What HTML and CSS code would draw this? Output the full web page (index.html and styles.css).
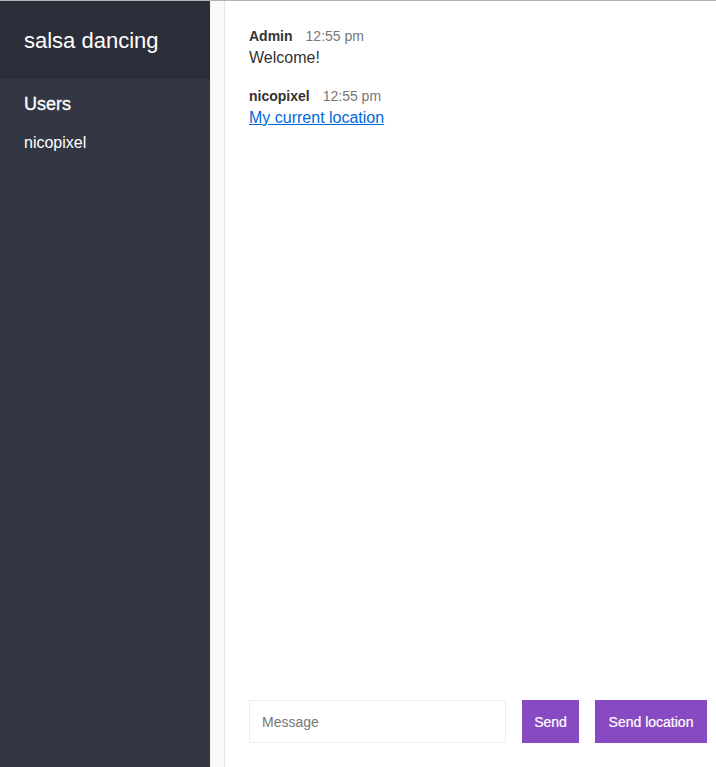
FILE: index.html
```html
<!DOCTYPE html>
<html>
<head>
<meta charset="utf-8">
<title>Chat</title>
<link rel="stylesheet" href="styles.css">
</head>
<body>
<div class="chat">
  <aside class="sidebar">
    <div class="sidebar__content">
      <h2 class="room-title">salsa dancing</h2>
      <h3 class="list-title">Users</h3>
      <ul class="users">
        <li>nicopixel</li>
      </ul>
    </div>
    <div class="scrolltrack"></div>
  </aside>
  <main class="main">
    <div class="messages">
      <div class="message">
        <p class="meta"><span class="name">Admin</span><span class="time">12:55 pm</span></p>
        <p class="body">Welcome!</p>
      </div>
      <div class="message">
        <p class="meta"><span class="name">nicopixel</span><span class="time">12:55 pm</span></p>
        <p class="body"><a href="#" class="link">My current location</a></p>
      </div>
    </div>
    <div class="compose">
      <form class="compose__form">
        <input class="compose__input" type="text" placeholder="Message">
        <button class="btn btn--send" type="button">Send</button>
      </form>
      <button class="btn btn--location" type="button">Send location</button>
    </div>
  </main>
</div>
</body>
</html>
```
FILE: styles.css
```css
* { box-sizing: border-box; }
html, body { margin: 0; padding: 0; height: 100%; }
body {
  font-family: "Liberation Sans", Arial, Helvetica, sans-serif;
  color: #333;
  border-top: 1px solid #b3b3b3;
  overflow: hidden;
}
.chat {
  display: flex;
  height: 766px;
}
.sidebar {
  display: flex;
  width: 225px;
  flex-shrink: 0;
  height: 100%;
}
.sidebar__content {
  width: 210px;
  background: #333744;
  color: #fff;
}
.scrolltrack {
  width: 15px;
  background: #fafafa;
  border-left: 1px solid #f2f2f2;
  border-right: 1px solid #e6e6e6;
}
.room-title {
  margin: 0;
  height: 78px;
  padding: 27px 24px 0;
  background: #2c2f3a;
  font-size: 22px;
  font-weight: 400;
  line-height: 25px;
}
.list-title {
  margin: 0;
  padding: 15px 24px 0;
  font-size: 18px;
  font-weight: 400;
  line-height: 21px;
  -webkit-text-stroke: 0.3px #fff;
}
.users {
  list-style: none;
  margin: 0;
  padding: 19px 24px 0;
  font-size: 16px;
  line-height: 18px;
}
.main {
  flex: 1;
  display: flex;
  flex-direction: column;
  background: #fff;
}
.messages {
  flex: 1;
  padding: 27px 24px 0;
}
.message { margin-bottom: 21px; }
.meta {
  margin: 0 0 5px;
  display: flex;
  font-size: 14px;
  line-height: 16px;
}
.name {
  font-weight: 700;
  color: #333;
  margin-right: 13px;
}
.time { color: #777; }
.body {
  margin: 0;
  font-size: 16px;
  line-height: 18px;
}
.link { color: #0068da; text-decoration: underline; }
.compose {
  display: flex;
  padding: 0 9px 24px 24px;
}
.compose__form {
  display: flex;
  flex: 1;
  margin: 0 16px 0 0;
}
.compose__input {
  flex: 1;
  height: 43px;
  margin-right: 16px;
  border: 1px solid #eee;
  padding: 0 12px;
  font-family: "Liberation Sans", Arial, sans-serif;
  font-size: 14px;
  color: #333;
  outline: none;
}
.compose__input::placeholder { color: #777; }
.btn {
  height: 43px;
  padding: 0;
  border: none;
  background: #884ac3;
  color: #fff;
  font-family: "Liberation Sans", Arial, sans-serif;
  font-size: 14px;
  -webkit-text-stroke: 0.2px #fff;
}
.btn--send { width: 57px; }
.btn--location { width: 112px; }
```
